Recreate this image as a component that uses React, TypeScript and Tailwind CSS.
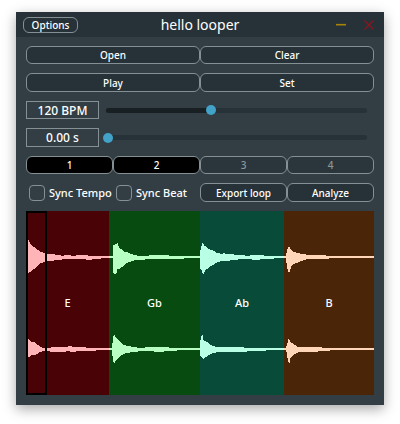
import { useState } from "react";
import type { ReactNode } from "react";

type Slice = {
  note: string;
  box: string;
  fill: string;
  width: number;
  left: string;
  right: string;
};

const slices: Slice[] = [
  {
    note: "E",
    box: "flex-[83] bg-[#490206]",
    fill: "fill-[#ffb5b8]",
    width: 83,
    left: "M1 29 H3 V31 H4 L5 34 L8 36 L10 38 L12 39 L14 41 H16 L18 42 L22 43 H27 L31 44 L38 45 V44 H45 V45 H50 V44 H62 V45 H83 V47 H75 V48 H66 V49 H60 V48 H40 L32 49 L24 50 L18 51 L15 52 L12 54 L10 56 L8 58 L6 59 L4 61 L1 62 Z",
    right: "M1 127 L3 128 L4 130 L6 131 L8 131 L10 133 L12 134 L14 136 L18 137 H25 V136 H42 V135 H46 V136 H60 V137 H83 V139 H70 V140 H57 L50 140 V141 H44 V140 H40 V141 H24 V140 H18 L14 141 L11 143 L8 144 H5 L3 146 H1 Z",
  },
  {
    note: "Gb",
    box: "flex-[91] bg-[#074b11]",
    fill: "fill-[#b8ffc3]",
    width: 91,
    left: "M0 45 H4 V34 H6 V33 L9 32 L10 37 L12 38 L14 39 L15 41 H18 L22 43 L25 44 L31 45 H40 V44 H60 V45 H91 V47 H75 V48 H40 L31 49 L26 49 L21 51 L17 52 L15 54 L13 56 L10 58 H8 V61 L6 63 L4 62 V47 H0 Z",
    right: "M0 137 H3 L4 127 L5 124 H6 V126 L8 127 L10 130 L12 132 L15 134 L19 135 L24 136 L31 137 H36 V136 H60 V137 H91 V139 H68 V140 H55 V141 H45 V140 H34 L24 141 L17 142 L13 144 L10 146 L7 149 L5 153 L4 149 L3 141 V139 H0 Z",
  },
  {
    note: "Ab",
    box: "flex-[84] bg-[#074b38]",
    fill: "fill-[#b8ffe6]",
    width: 84,
    left: "M0 41 L1 37 L2 34 L3 31 L4 35 L5 34 L7 37 L9 38 L11 39 L14 40 L16 42 H20 V43 L25 42 V43 H30 L37 44 H45 V45 H50 V44 H64 V45 H84 V47 H74 V48 H60 V49 H52 V48 H38 V49 H30 V50 H22 L15 52 L13 54 L10 55 L9 57 L6 58 L5 60 L3 64 L2 60 L0 57 Z",
    right: "M0 129 H1 V125 L2 124 H3 V129 L5 130 L7 131 L9 133 L13 135 L16 136 H44 V137 H84 V139 H66 V140 H47 V141 H18 L13 142 L9 144 L6 146 L3 148 L2 147 L0 145 Z",
  },
  {
    note: "B",
    box: "flex-[90] bg-[#4b2507]",
    fill: "fill-[#ffd6b8]",
    width: 90,
    left: "M0 45 H2 L3 40 L4 36 H6 L7 39 L9 41 L14 42 L18 43 H22 V44 H42 V45 H90 V47 H45 V48 H24 L20 49 L15 51 L10 53 L7 55 L6 61 H4 L3 54 L2 49 V47 H0 Z",
    right: "M0 137 H2 L4 131 L5 126 L6 131 L8 132 L11 134 L14 136 H38 V137 H90 V139 H46 V140 H34 V141 H15 L11 143 L8 145 L6 147 V152 L4 151 L3 143 L2 139 H0 Z",
  },
];

function PillButton({
  children,
  className = "bg-[#263238] text-white",
  disabled = false,
  onClick,
}: {
  children: ReactNode;
  className?: string;
  disabled?: boolean;
  onClick?: () => void;
}) {
  return (
    <button
      type="button"
      disabled={disabled}
      onClick={onClick}
      className={`flex flex-1 items-center justify-center rounded-md border border-[#849094] text-[10px] leading-none font-medium ${className}`}
    >
      {children}
    </button>
  );
}

function SliderRow({
  label,
  unit,
  digits,
  max,
  initial,
  filled,
  height,
}: {
  label: string;
  unit: string;
  digits: number;
  max: number;
  initial: number;
  filled: boolean;
  height: string;
}) {
  const [value, setValue] = useState(initial);
  return (
    <div className={`flex gap-1 ${height}`}>
      <input
        type="text"
        readOnly
        aria-label={`${label} value`}
        value={`${value.toFixed(digits)} ${unit}`}
        className="w-[73px] border border-[#849094] bg-transparent text-center text-xs leading-none font-medium text-white outline-none"
      />
      <div className="grid flex-1 items-center pr-1">
        <div className="mx-[3px] h-[5px] overflow-hidden rounded-full bg-[#263238] [grid-area:1/1]">
          {filled && (
            <div
              className="h-full bg-[#182023]"
              style={{ width: `${(value / max) * 100}%` }}
            />
          )}
        </div>
        <input
          type="range"
          aria-label={label}
          min={0}
          max={max}
          step="any"
          value={value}
          onChange={(e) => setValue(Number(e.target.value))}
          className="h-[10px] w-full appearance-none bg-transparent [grid-area:1/1] [&::-webkit-slider-thumb]:size-[10px] [&::-webkit-slider-thumb]:appearance-none [&::-webkit-slider-thumb]:rounded-full [&::-webkit-slider-thumb]:bg-[#42a2c8]"
        />
      </div>
    </div>
  );
}

function Toggle({ children }: { children: ReactNode }) {
  return (
    <label className="flex w-1/4 items-center gap-1 pl-[3px] text-[11px] leading-none font-medium whitespace-nowrap text-white">
      <input
        type="checkbox"
        className="size-4 shrink-0 appearance-none rounded border border-[#849094] checked:bg-[#42a2c8]"
      />
      {children}
    </label>
  );
}

export default function App() {
  const [active, setActive] = useState([true, true, false, false]);

  return (
    <div className="px-4 pt-3 pb-5 font-['Noto_Sans',sans-serif]">
      <main className="bg-[#323e44] shadow-[0_4px_12px_rgba(0,0,0,0.35)]">
        <header className="grid h-[25px] grid-cols-[1fr_auto_1fr] items-center bg-[#263238] px-[7px]">
          <div className="flex h-4 w-[55px]">
            <PillButton>Options</PillButton>
          </div>
          <h1 className="text-sm leading-none font-normal text-white">
            hello looper
          </h1>
          <div className="flex items-center justify-end gap-[18px] pr-[3px]">
            <button type="button" aria-label="Minimise">
              <svg className="block h-[10px] w-[10px]" viewBox="0 0 10 10">
                <path d="M0 4.7H10" stroke="#a98308" strokeWidth="1.6" />
              </svg>
            </button>
            <button type="button" aria-label="Close">
              <svg className="block h-[10px] w-[10px]" viewBox="0 0 10 10">
                <path
                  d="M.5.5L9.5 9.5M9.5.5L.5 9.5"
                  stroke="#8f1420"
                  strokeWidth="1.2"
                />
              </svg>
            </button>
          </div>
        </header>

        <div className="flex flex-col gap-[9px] px-[10px] pt-[9px] pb-[10px]">
          <div className="flex h-[18px]">
            <PillButton>Open</PillButton>
            <PillButton>Clear</PillButton>
          </div>
          <div className="flex h-[19px]">
            <PillButton>Play</PillButton>
            <PillButton>Set</PillButton>
          </div>
          <SliderRow
            label="Tempo"
            unit="BPM"
            digits={0}
            max={300}
            initial={120}
            filled
            height="h-[18px]"
          />
          <SliderRow
            label="Offset"
            unit="s"
            digits={2}
            max={10}
            initial={0}
            filled={false}
            height="h-[19px]"
          />
          <div className="flex h-[18px]">
            {active.map((on, i) => (
              <PillButton
                key={i}
                disabled={i > 1}
                onClick={() =>
                  setActive(active.map((v, j) => (j === i ? !v : v)))
                }
                className={
                  on ? "bg-black text-white" : "bg-[#2a363b] text-[#8d979a]"
                }
              >
                {i + 1}
              </PillButton>
            ))}
          </div>
          <div className="flex h-[19px]">
            <Toggle>Sync Tempo</Toggle>
            <Toggle>Sync Beat</Toggle>
            <div className="flex w-1/2">
              <div className="flex w-1/2">
                <PillButton>Export loop</PillButton>
              </div>
              <div className="flex w-1/2">
                <PillButton>Analyze</PillButton>
              </div>
            </div>
          </div>
          <div className="relative flex h-[184px]">
            {slices.map((s) => (
              <div key={s.note} className={`grid ${s.box}`}>
                <svg
                  className={`h-full w-full [grid-area:1/1] ${s.fill}`}
                  viewBox={`0 0 ${s.width} 184`}
                  preserveAspectRatio="none"
                  shapeRendering="crispEdges"
                >
                  <path d={s.left} />
                  <path d={s.right} />
                </svg>
                <span className="place-self-center pb-0.5 text-[11px] leading-none font-medium text-white [grid-area:1/1]">
                  {s.note}
                </span>
              </div>
            ))}
            <div className="absolute inset-y-0 left-0 w-[21px] border-2 border-black" />
          </div>
        </div>
      </main>
    </div>
  );
}
